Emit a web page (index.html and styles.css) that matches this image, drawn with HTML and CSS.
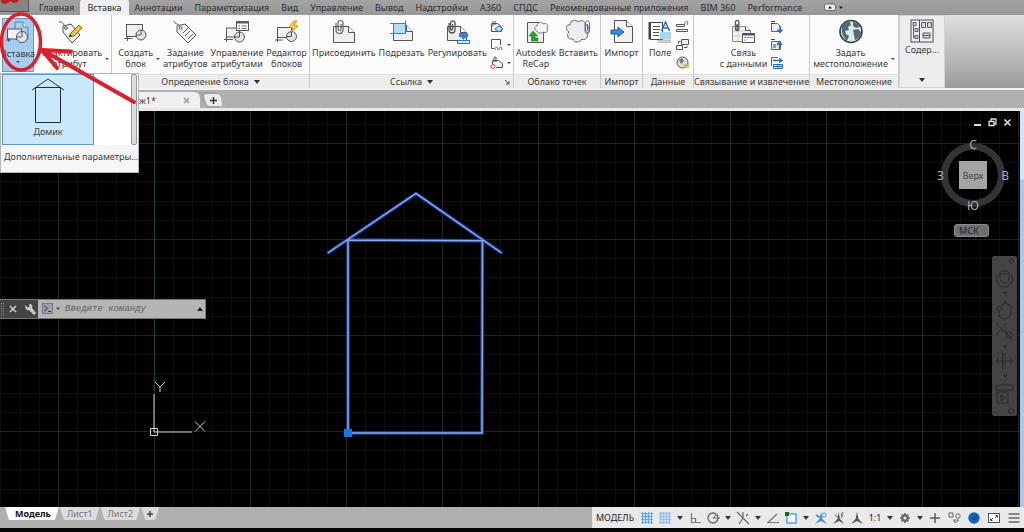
FILE: index.html
```html
<!DOCTYPE html>
<html lang="ru">
<head>
<meta charset="utf-8">
<title>Чертеж</title>
<link rel="stylesheet" href="styles.css">
</head>
<body>
<div class="app">
  <nav class="tabs">
    <button class="app-menu" aria-label="Меню"><svg width="28" height="11" viewBox="0 0 28 11"><path d="M1 0v2l3 2 4-1 2-2 4 2 4-1 1-2z" fill="#c8181e"/></svg></button>
    <button class="tab">Главная</button>
    <button class="tab active">Вставка</button>
    <button class="tab">Аннотации</button>
    <button class="tab">Параметризация</button>
    <button class="tab">Вид</button>
    <button class="tab">Управление</button>
    <button class="tab">Вывод</button>
    <button class="tab">Надстройки</button>
    <button class="tab">A360</button>
    <button class="tab">СПДС</button>
    <button class="tab">Рекомендованные приложения</button>
    <button class="tab">BIM 360</button>
    <button class="tab">Performance</button>
    <button class="collapse" aria-label="Свернуть ленту"><svg width="20" height="9" viewBox="0 0 20 9"><rect x=".5" y="1" width="11" height="6.500" rx="2" fill="#eee" stroke="#666"/><path d="M4 5.500 6 3l2 2.500z" fill="#222"/><path d="M15 3.500h4L17 6z" fill="#222"/></svg></button>
  </nav>

  <div class="ribbon">
    <section class="panel p-block">
      <div class="body">
        <button class="tool selected">
          <svg class="ico" viewBox="0 0 26 26"><path d="M10 2h8l5 5v12H10z" fill="#a9cdec" stroke="#5b86b0"/><path d="M18 2v5h5" fill="#d7eafa" stroke="#5b86b0"/><rect x="2.500" y="9" width="14" height="10" fill="#f2f2f2" stroke="#555"/><circle cx="17" cy="17" r="5.500" fill="#dfe6ec" stroke="#555"/><path d="M17 17v-5M17 17h-5" stroke="#555"/><path d="M1 20h5M3.500 18v4" stroke="#555"/></svg>
          <span>Вставка</span>
          <i class="caret"></i>
        </button>
        <button class="tool edit">
          <svg class="ico" viewBox="0 0 26 26"><path d="M2 3c3-1 4 2 6 4" fill="none" stroke="#555"/><path d="M6 7l8-2 9 11-8 8-9-11z" fill="#f4f4f4" stroke="#555"/><circle cx="9" cy="9" r="1.400" fill="#fff" stroke="#555"/><path d="M12 18l2-4 8-8 3 3-8 8z" fill="#f4c13d" stroke="#8a6914"/><path d="M12 18l1-3 2 2z" fill="#333"/></svg>
          <span>Редактировать<br>атрибут</span>
        </button>
        <i class="caret side"></i>
      </div>
      <h2>Блок</h2>
    </section>

    <section class="panel p-define">
      <div class="body">
        <button class="tool">
          <svg class="ico" viewBox="0 0 26 26"><rect x="3.500" y="5.500" width="16" height="12" fill="#f0f0f0" stroke="#555"/><path d="M1.500 19.500h8M4.500 17v5" stroke="#555" fill="none"/><circle cx="18" cy="16" r="5" fill="#e2e2e2" stroke="#555"/><path d="M18 16v-5M18 16h-5" stroke="#555"/></svg>
          <span>Создать<br>блок</span>
        </button>
        <i class="caret side"></i>
        <button class="tool">
          <svg class="ico" viewBox="0 0 26 26"><path d="M2 2c1 4 4 2 6 5" fill="none" stroke="#555"/><path d="M5 7l8-2 11 11-8 8L5 13z" fill="#f0f0f0" stroke="#555"/><circle cx="8.500" cy="9" r="1.400" fill="#fff" stroke="#555"/><path d="M11 14l5-5M13 17l5-5M16 20l5-5" stroke="#666"/></svg>
          <span>Задание<br>атрибутов</span>
        </button>
        <button class="tool">
          <svg class="ico" viewBox="0 0 26 26"><rect x="2.500" y="9" width="13" height="9" fill="#f0f0f0" stroke="#555"/><path d="M0 20.500h9M2.500 18v5" stroke="#555"/><circle cx="15.500" cy="18" r="5" fill="#e2e2e2" stroke="#555"/><path d="M15.500 18v-5M15.500 18h-5" stroke="#555"/><rect x="12.500" y="2.500" width="12" height="9" fill="#fff" stroke="#555"/><path d="M12.500 3.500h12" stroke="#51637a" stroke-width="2"/><path d="M14 7h2M17.500 7h5M14 9.500h2M17.500 9.500h5" stroke="#58718c"/></svg>
          <span>Управление<br>атрибутами</span>
        </button>
        <button class="tool">
          <svg class="ico" viewBox="0 0 26 26"><rect x="3.500" y="8.500" width="14" height="10" fill="#f0f0f0" stroke="#555"/><path d="M1 21h8M3.500 18v5" stroke="#555"/><circle cx="17.500" cy="17.500" r="5" fill="#e2e2e2" stroke="#555"/><path d="M17.500 17.500v-5M17.500 17.500h-5" stroke="#555"/><path d="M20 2l-5 6 4 1-3 5 8-7-4-1 3-4z" fill="#fbd04a" stroke="#d08b18"/></svg>
          <span>Редактор<br>блоков</span>
        </button>
      </div>
      <h2>Определение блока <i class="caret big"></i></h2>
    </section>

    <section class="panel p-link">
      <div class="body">
        <button class="tool">
          <svg class="ico" viewBox="0 0 26 26"><path d="M2.500 7.500h15l6 6v10h-21z" fill="#eee" stroke="#555"/><path d="M17.500 7.500v6h6" fill="#fff" stroke="#555"/><path d="M5 4v7a3.500 3.500 0 0 0 7 0V4a2.500 2.500 0 0 0-5 0v6a1.500 1.500 0 0 0 3 0V5" fill="none" stroke="#666" stroke-width="1.200"/></svg>
          <span>Присоединить</span>
        </button>
        <button class="tool">
          <svg class="ico" viewBox="0 0 26 26"><path d="M4.500 6.500h13l6 6v9h-19z" fill="#eee" stroke="#555"/><path d="M17.500 6.500v6h6" fill="#fff" stroke="#555"/><rect x="4.500" y="4.500" width="12" height="10" fill="#b5dcf7"/><path d="M1 14.500h15.500V1.500M1 4.500h15.500M4.500 4.500v10" fill="none" stroke="#3681c2"/></svg>
          <span>Подрезать</span>
        </button>
        <button class="tool">
          <svg class="ico" viewBox="0 0 26 26"><path d="M3.500 7.500h13l6 6v8h-19z" fill="#eee" stroke="#555"/><path d="M16.500 7.500v6h6" fill="#fff" stroke="#555"/><path d="M5 4v7a3 3 0 0 0 6 0V4a2.200 2.200 0 0 0-4.400 0v6a1 1 0 0 0 2 0V5" fill="none" stroke="#555" stroke-width="1.300"/><path d="M15 14h9v4h-2l-2.500 3-2.500-3h-2z" fill="#2f86c9"/><path d="M13.500 21.500h12v3h-12z" fill="#cce7fa" stroke="#2f75b5"/></svg>
          <span>Регулировать</span>
        </button>
        <div class="smalls">
          <button class="small" aria-label="Слои подложки"><svg viewBox="0 0 13 13"><path d="M1.500 3.500h6l4 3v5h-10z" fill="#eee" stroke="#555"/><path d="M3 1v5M5 1v4" stroke="#555"/><path d="M5 9l4-3 4 3-4 3z" fill="#b8defb" stroke="#2b78bd"/></svg></button>
          <button class="small" aria-label="Контуры"><svg viewBox="0 0 13 13"><path d="M4 10.500H1.500v-9h9V7" fill="#fff" stroke="#555"/><path d="M5 12c0-4 3-4 3 0m1 0c0-4 3-4 3 0" fill="none" stroke="#2b78bd"/></svg><i class="caret"></i></button>
          <button class="small" aria-label="Привязка"><svg viewBox="0 0 13 13"><path d="M2.500 8V4.500h6l4 3v4H6" fill="#eee" stroke="#555"/><path d="M4 6V2c0-1.500 2-1.500 2 0v4" fill="none" stroke="#555"/><circle cx="3" cy="10.500" r="2" fill="#fff" stroke="#d5422f"/></svg><i class="caret"></i></button>
        </div>
      </div>
      <h2>Ссылка <i class="caret big"></i><svg class="launcher" viewBox="0 0 6 6"><path d="M1 1l3 3M5 2v3H2" fill="none" stroke="#444"/></svg></h2>
    </section>

    <section class="panel p-cloud">
      <div class="body">
        <button class="tool">
          <svg class="ico" viewBox="0 0 26 26"><path d="M4.500 3.500h12v6h4v14h-16z" fill="#eee" stroke="#555"/><path d="M14 12c-3-1-3-4 0-5 0-4 5-5 6-2 4-2 6 2 4 4 2 3-1 6-4 4-2 2-5 1-6-1z" fill="#f5f5f5" stroke="#777"/><path d="M10 12l-4 5h2.500v5H15v-3h-3v-2h2.500z" fill="#29a329" stroke="#168016" stroke-width=".6"/></svg>
          <span>Autodesk<br>ReCap</span>
        </button>
        <button class="tool">
          <svg class="ico" viewBox="0 0 26 26"><path d="M4 13C0 10 1 5 5 6c0-5 6-6 8-3 4-3 8 0 8 3 4 2 4 7 1 8 2 4-2 8-5 6-2 4-8 4-9 0-5 1-7-4-4-7z" fill="#ededed" stroke="#666"/><path d="M20 4v8a2 2 0 0 0 4.500 0V4c0-3-4-3-4 0v7c0 1.500 2 1.500 2 0V5" fill="none" stroke="#3d78ad"/></svg>
          <span>Вставить</span>
        </button>
      </div>
      <h2>Облако точек</h2>
    </section>

    <section class="panel p-import">
      <div class="body">
        <button class="tool">
          <svg class="ico" viewBox="0 0 26 26"><path d="M5.500 1.500h12l6 6v16h-18z" fill="#f2f2f2" stroke="#555"/><path d="M17.500 1.500v6h6" fill="#fff" stroke="#555"/><path d="M2 11h7V8l6 5-6 5v-3H2z" fill="#3b8fe0" stroke="#1c5ca3"/></svg>
          <span>Импорт</span>
        </button>
      </div>
      <h2>Импорт</h2>
    </section>

    <section class="panel p-data">
      <div class="body">
        <button class="tool">
          <svg class="ico" viewBox="0 0 26 26"><path d="M3.500 3.500h12v17h-12z" fill="#fff" stroke="#444"/><path d="M2.500 3v17.500" stroke="#444" stroke-width="2"/><path d="M6 7.500h7M6 10.500h7M6 13.500h6M6 16.500h6" stroke="#555"/><rect x="13" y="13" width="11" height="7" fill="#a8d6f5"/><path d="M14.500 12l4-9 4 9M16 9h5" fill="none" stroke="#2272b8" stroke-width="1.500"/><rect x="11.500" y="21" width="12" height="2.500" fill="#e2d9c5" stroke="#888" stroke-width=".5"/></svg>
          <span>Поле</span>
        </button>
        <div class="smalls">
          <button class="small" aria-label="Обновить поля"><svg viewBox="0 0 13 13"><path d="M.5 4.500h8v2h-8zM.5 9.500h11v2H.5z" fill="#fff" stroke="#555"/><path d="M9 4c-1-3 2-3 3-2M12 2l-1 3" fill="none" stroke="#688a39"/></svg></button>
          <button class="small" aria-label="Связь OLE"><svg viewBox="0 0 13 13"><path d="M5.500 1.500h7v5h-7zM.5 7.500h6v4h-6z" fill="#f5f5f5" stroke="#555"/><path d="M2.500 6V3.500h2M8 9.500h3V8" fill="none" stroke="#555"/></svg></button>
          <button class="small" aria-label="Гиперссылка"><svg viewBox="0 0 13 13"><circle cx="6.500" cy="6.500" r="5.500" fill="#ddd" stroke="#555"/><path d="M3 4l3-2 2 3-3 3zM8 7l3-1" fill="#777"/><path d="M8 9h5M8 11h5" stroke="#ddaf48" stroke-width="1.500"/></svg></button>
        </div>
      </div>
      <h2>Данные</h2>
    </section>

    <section class="panel p-extract">
      <div class="body">
        <button class="tool">
          <svg class="ico" viewBox="0 0 26 26"><path d="M2.500 7.500h13l5 4v11h-18z" fill="#f4f4f4" stroke="#888"/><path d="M3 12h12M3 17h12M8 8v14" stroke="#ccc"/><path d="M15.500 7.500v4h5" fill="#fff" stroke="#555"/><path d="M5.500 3v3a1.700 1.700 0 0 0 3.400 0V3a1.700 1.700 0 0 0-3.400 0M5.500 8v2a1.700 1.700 0 0 0 3.400 0V8M7.200 5v6" fill="none" stroke="#555" stroke-width="1.300"/><rect x="12.500" y="14.500" width="12" height="9" fill="#fff" stroke="#555"/><path d="M12.500 15.500h12" stroke="#445b73" stroke-width="2"/><path d="M14 18.500h2M17 18.500h6M14 21h2" stroke="#888"/></svg>
          <span>Связь<br>с данными</span>
        </button>
        <div class="smalls">
          <button class="small" aria-label="Загрузить"><svg viewBox="0 0 13 13"><path d="M1.500 11.500v-8h6l3 3v5z" fill="#eee" stroke="#666"/><path d="M1 1.500h4M1 3.500h4" stroke="#444"/><path d="M10 6v6M7.500 9.500 10 12.500l2.500-3" fill="none" stroke="#2272b8" stroke-width="1.500"/></svg></button>
          <button class="small" aria-label="Выгрузить"><svg viewBox="0 0 13 13"><path d="M1.500 11.500v-8h9v8z" fill="#eee" stroke="#666"/><path d="M1 1.500h4M3 7h3M3 9h3" stroke="#444"/><path d="M9.500 11V5M7 7l2.500-3L12 7" fill="none" stroke="#2272b8" stroke-width="1.500"/></svg></button>
          <button class="small" aria-label="Извлечь данные"><svg viewBox="0 0 13 13"><path d="M1.500 10V1.500H8" fill="none" stroke="#666"/><path d="M3 4.500h8M9 2.500l3 2-3 2" fill="none" stroke="#2272b8" stroke-width="1.400"/><path d="M3.500 8.500h9v4h-9zM3.500 10.500h9M8 8.500v4" fill="#cce7fa" stroke="#2272b8"/></svg></button>
        </div>
      </div>
      <h2>Связывание и извлечение</h2>
    </section>

    <section class="panel p-place">
      <div class="body">
        <button class="tool">
          <svg class="ico" viewBox="0 0 26 26"><circle cx="13" cy="12.500" r="11" fill="#dcebea" stroke="#333f45" stroke-width="1.600"/><path d="M4 8c2-4 6-6 8-5l1 3-3 2 1 3-4 1 1 3 3 2-2 5c-3-2-6-8-5-14zM15 3c3 0 6 3 7 5l-4 1-3-2zM15 11l5-1 3 3c0 4-4 8-6 8l-1-5z" fill="#526b72"/></svg>
          <span>Задать<br>местоположение</span>
        </button>
        <i class="caret side"></i>
      </div>
      <h2>Местоположение</h2>
    </section>

    <button class="content-panel">
      <svg class="ico" viewBox="0 0 26 26"><rect x="2" y="2" width="22" height="22" fill="#efeff2" stroke="#4c4c55"/><path d="M10.500 2v22" stroke="#4c4c55"/><path d="M4 4.500h3v3H4zM6 10.500h3v3H6zM6 17.500h3v3H6zM4.500 7.500v12H6M12.500 4.500h4v5h-4zM18.500 4.500h4v5h-4zM14 15h7v5h-7zM14 17.500h7" fill="#d5d8e2" stroke="#5a5a66"/></svg>
      <span>Содер...</span>
      <i class="caret big"></i>
    </button>
  </div>

  <div class="files">
    <div class="file"><span>ж1*</span><button class="close" aria-label="Закрыть"><svg width="7" height="7" viewBox="0 0 7 7"><path d="M1 1l5 5M6 1 1 6" stroke="#999" stroke-width="1.500"/></svg></button></div>
    <button class="add-file" aria-label="Новый чертеж"><svg width="28" height="16" viewBox="0 0 28 16"><path d="M0 0h15q4 0 4 4v12H8Q2 10 0 0z" fill="#999" opacity=".55"/><path d="M4 4q0-2 3-2h10q3 0 4 4l1 6q0 2-2 2H10q-3 0-4-3z" fill="#ececec"/><path d="M13.500 5v7M10 8.500h7" stroke="#333" stroke-width="1.500"/></svg></button>
  </div>

  <main class="workspace">
    <svg class="drawing" width="100%" height="100%">
      <defs>
        <pattern id="grid" x="58" y="32" width="96" height="96" patternUnits="userSpaceOnUse">
          <path d="M19.500 0v96M38.500 0v96M58.500 0v96M77.500 0v96M0 19.500h96M0 38.500h96M0 58.500h96M0 77.500h96" stroke="#0f0f0f"/>
          <path d="M.5 0v96M0 .5h96" stroke="#232323"/>
        </pattern>
      </defs>
      <rect width="100%" height="100%" fill="url(#grid)"/>
      <path d="M154.500 0v282" stroke="#12452b"/>
      <path d="M192 320.500H1020" stroke="#471414"/>
      <g fill="none" stroke="#d2d2d2"><path d="M154 283v38h38M150.500 317.500h7v7h-7z"/><path d="M155 271l5 5 5-5M160 276v5M195 310.500l10 10M205 310.500l-10 10"/></g>
      <g fill="none" stroke-linecap="round"><path d="M328.500 141.500 416 82.500 501 141.500M348 322V129l134.500.7L482 322z" stroke="#1b3f99" stroke-width="3.500"/><path d="M328.500 141.500 416 82.500 501 141.500M348 322V129l134.500.7L482 322z" stroke="#86a9ec" stroke-width="1.500"/></g>
      <rect x="344" y="318" width="8" height="8" fill="#1478dc"/>
    </svg>

    <div class="window-buttons">
      <button aria-label="Свернуть"><svg width="9" height="9" viewBox="0 0 9 9"><path d="M1 7h7" stroke="#ddd" stroke-width="2"/></svg></button>
      <button aria-label="Восстановить"><svg width="9" height="9" viewBox="0 0 9 9"><path d="M3 3V1h5v5H6M1 3.500h5v4H1z" fill="none" stroke="#ddd" stroke-width="1.300"/></svg></button>
      <button aria-label="Закрыть"><svg width="9" height="9" viewBox="0 0 9 9"><path d="M1.500 1.500l6 6M7.500 1.500l-6 6" stroke="#ddd" stroke-width="1.700"/></svg></button>
    </div>

    <div class="viewcube">
      <span class="north">С</span><span class="west">З</span><button class="face">Верх</button><span class="east">В</span><span class="south">Ю</span>
    </div>
    <button class="ucs">МСК</button>

    <div class="navbar">
      <svg width="25" height="160" viewBox="0 0 25 160"><g fill="none" stroke="#2b2b2b"><circle cx="19.500" cy="5" r="2"/><circle cx="12.500" cy="23" r="8"/><path d="M8 18h9v6q-4 6-9 0zM11 36.500h4l-2 2zM7 61v-6l-2-4 2-1 3 4v-6h2v-2h2v2h2v1h3v8q-1 6-6 6-5 0-6-4M4 67l12 12M15 67 4 79M13 74l7 10"/><circle cx="17" cy="79" r="3"/><path d="M11 90h4l-2 2zM13 97v16M10.500 97v16M5 105h15M7 102l-3 3 3 3M18 102l3 3-3 3M11 119h4l-2 2zM4 129h17v5H4zM5 136h11v11H5zM9 139l4 3-4 3z"/><circle cx="19.500" cy="155" r="2.500"/></g></svg>
    </div>

    <form class="command">
      <div class="handle">
        <svg width="38" height="18" viewBox="0 1 38 18"><path d="M1.500 4v13M3.500 4v13" stroke="#999" stroke-dasharray="1 1.500"/><path d="M10 7l6 6M16 7l-6 6" stroke="#ccc" stroke-width="1.600"/><path d="M25 6l2.500 2.500 2-1L29 5c3 0 4 2 3 4l4 5-2 2-5-5c-2 1-4-1-4-5z" fill="#ccc"/></svg>
      </div>
      <svg class="prompt" width="20" height="12" viewBox="0 0 20 12"><rect x=".5" y=".5" width="10" height="10" fill="#9c9fa8" stroke="#777b85"/><path d="M2.500 3l3 2.500-3 2.500M6 8.500h3" fill="none" stroke="#333"/><path d="M14 4.500h4l-2 2.500z" fill="#444"/></svg>
      <input type="text" aria-label="Команда" placeholder="Введите команду">
      <button type="button" class="history" aria-label="Журнал команд"><i class="caret up"></i></button>
    </form>

    <div class="edge"></div>
  </main>

  <footer class="bottom">
    <div class="layouts">
      <button class="layout current">Модель</button>
      <button class="layout">Лист1</button>
      <button class="layout">Лист2</button>
      <button class="layout plus" aria-label="Новый лист"><svg width="8" height="8" viewBox="0 0 8 8"><path d="M4 1v6M1 4h6" stroke="#444" stroke-width="1.500"/></svg></button>
    </div>
    <div class="status">
      <button class="model">МОДЕЛЬ</button>
      <button class="st" aria-label="Сетка"><svg viewBox="0 0 14 14"><rect x="2" y="2" width="10" height="10" fill="#c1dcf7"/><path d="M2.500 1v12M5.500 1v12M8.500 1v12M11.500 1v12M1 2.500h12M1 5.500h12M1 8.500h12M1 11.500h12" stroke="#6aa7e6"/></svg></button>
      <button class="st" aria-label="Шаг"><svg viewBox="0 0 14 14"><rect x="1" y="1" width="12" height="12" fill="#c9dcf3"/><path d="M2.500 1v12M5.500 1v12M8.500 1v12M11.500 1v12M1 2.500h12M1 5.500h12M1 8.500h12M1 11.500h12" stroke="#9bbfe8"/></svg></button>
      <button class="st arrow" aria-label="Параметры шага"><i class="caret big"></i></button>
      <button class="st" aria-label="Орто"><svg viewBox="0 0 14 14"><path d="M3.500 2v9.500H13M3.500 7.500h4v4" fill="none" stroke="#777" stroke-width="1.200"/></svg></button>
      <button class="st" aria-label="Полярное отслеживание"><svg viewBox="0 0 14 14"><circle cx="7" cy="7" r="5" fill="none" stroke="#666" stroke-width="1.300"/><path d="M7 7h7M7 7l4-4" stroke="#666"/></svg></button>
      <button class="st arrow" aria-label="Углы"><i class="caret big"></i></button>
      <button class="st" aria-label="Изометрия"><svg viewBox="0 0 14 14"><path d="M1 1l12 12M7 1v6M7 7l-4 6M10 5l2-2" fill="none" stroke="#666" stroke-width="1.200"/></svg></button>
      <button class="st arrow" aria-label="Плоскости"><i class="caret big"></i></button>
      <button class="st" aria-label="Отслеживание"><svg viewBox="0 0 14 14"><path d="M11 3 2 11.500h11" fill="none" stroke="#777" stroke-width="1.200"/></svg></button>
      <button class="st" aria-label="Объектная привязка"><svg viewBox="0 0 14 14"><rect x="3" y="3" width="9" height="9" fill="#fff" stroke="#5b9fe0" stroke-width="1.500"/><rect x="1" y="1" width="4" height="4" fill="#17682c"/></svg></button>
      <button class="st arrow" aria-label="Виды привязки"><i class="caret big"></i></button>
      <button class="st" aria-label="Аннотации"><svg viewBox="0 0 14 14"><path d="M7 1l1.500 7 4.500 5-6-3-6 3 4.500-5z" fill="#3d8fe0"/><path d="M2 4l5 3" stroke="#3d8fe0" stroke-width="1.500"/><circle cx="10" cy="4" r="2" fill="#fff" stroke="#3d8fe0"/></svg></button>
      <button class="st" aria-label="Автомасштаб"><svg viewBox="0 0 14 14"><path d="M6.500 1 8 8l4.500 5-5.500-3-6 3 4.500-5z" fill="#555"/><path d="M3 4l4 3M11 1 9 4h2L9 7" fill="none" stroke="#555"/></svg></button>
      <button class="st" aria-label="Масштаб аннотаций"><svg viewBox="0 0 14 14"><path d="M7 1l1.500 7 4.500 5-6-3-6 3 4.500-5z" fill="#555"/></svg></button>
      <button class="st scale">1:1</button>
      <button class="st arrow" aria-label="Масштаб"><i class="caret big"></i></button>
      <button class="st" aria-label="Рабочее пространство"><svg viewBox="0 0 14 14"><circle cx="7" cy="7" r="2.700" fill="none" stroke="#666" stroke-width="2.200"/><path d="M7 2v2M7 10v2M2 7h2M10 7h2M3.500 3.500l1 1M9.500 9.500l1 1M10.500 3.500l-1 1M4.500 9.500l-1 1" stroke="#666" stroke-width="1.600"/></svg></button>
      <button class="st arrow" aria-label="Пространства"><i class="caret big"></i></button>
      <button class="st" aria-label="Монитор"><svg viewBox="0 0 14 14"><path d="M7 2v10M2 7h10" stroke="#555" stroke-width="1.400"/></svg></button>
      <button class="st wide" aria-label="Изоляция объектов"><svg viewBox="0 0 14 14"><path d="M2 2h4v4H2zM8.500 12l-2-3h5z" fill="none" stroke="#666"/><circle cx="11" cy="5" r="2.200" fill="none" stroke="#666"/></svg></button>
      <button class="st wide" aria-label="Графика"><svg viewBox="0 0 14 14"><circle cx="7" cy="7" r="5.700" fill="#1265b5"/><path d="M6 9l4-4" stroke="#0a3f7d" stroke-width="1.500"/></svg></button>
      <button class="st wide" aria-label="Полный экран"><svg viewBox="0 0 14 14"><rect x="1.500" y="2.500" width="11" height="9" fill="#fff" stroke="#555"/><path d="M3.500 9.500V7.500M3.500 9.500h2M4 9l2-2M10.500 4.500v2M10.500 4.500h-2M10 5 8 7" stroke="#444" fill="none"/></svg></button>
      <button class="st wide" aria-label="Настройка"><svg viewBox="0 0 14 14"><path d="M1.500 3h11M1.500 7h11M1.500 11h11" stroke="#666" stroke-width="1.300"/></svg></button>
    </div>
  </footer>

  <div class="gallery">
    <div class="gallery-list">
      <button class="gallery-item">
        <svg width="34" height="48" viewBox="0 0 34 48"><path d="M1 14 17 3l16 11M4.500 11.500h25v35h-25z" fill="none" stroke="#222e38"/></svg>
        <span>Домик</span>
      </button>
      <div class="scrollbar"></div>
    </div>
    <button class="more">Дополнительные параметры...</button>
  </div>

  <svg class="marks" width="140" height="110" viewBox="0 0 140 110"><g fill="none" stroke="#dc1f2c" stroke-width="3.500" stroke-linecap="round" stroke-linejoin="round"><ellipse cx="21" cy="42" rx="19.500" ry="28"/><path d="M134 102 44 51M71 51.500 42 50 57 68" stroke-width="4"/></g></svg>
</div>
</body>
</html>
```
FILE: styles.css
```css
* { box-sizing: border-box; }
html, body { height: 100%; margin: 0; }
body {
  font-family: "Noto Sans", "Open Sans", sans-serif;
  font-size: 9px;
  line-height: 11px;
  color: #3c3c3c;
  background: #050505;
}
button {
  margin: 0;
  padding: 0;
  border: 0;
  background: none;
  font: inherit;
  color: inherit;
}
svg { display: block; flex: none; }

.app {
  position: relative;
  display: flex;
  flex-direction: column;
  height: 100vh;
  padding-bottom: 4px;
  overflow: hidden;
}

/* carets */
.caret {
  display: inline-block;
  flex: none;
  border: 2px solid transparent;
  border-top-color: #444;
  border-bottom: 0;
}
.caret.big { border-width: 4px 3px 0; border-top-color: #333; }
.caret.up { border: 3px solid transparent; border-bottom: 4px solid #222; border-top: 0; }
.caret.side { align-self: center; margin-top: 28px; }

/* tabs */
.tabs {
  display: flex;
  height: 15px;
  background: linear-gradient(#a3a3a3, #979797);
  color: #2c2c2c;
}
.app-menu {
  display: flex;
  width: 29px;
  height: 12px;
  margin-right: 4px;
  background: #858585;
  border-right: 1px solid #555;
  border-bottom: 1px solid #555;
}
.tab { padding: 0 6px; white-space: nowrap; }
.tab.active { padding: 0 7px; background: #efefef; border-radius: 2px 2px 0 0; }
.collapse { margin-left: 16px; }

/* ribbon */
.ribbon {
  display: flex;
  height: 75px;
  border-bottom: 2px solid #f4f4f4;
  background: linear-gradient(#e0e0e0, #9c9c9c);
}
.panel {
  display: flex;
  flex-direction: column;
  flex: none;
  background: #fbfbfb;
  border-right: 1px solid #c9c9c9;
}
.body { display: flex; flex: 1; justify-content: center; gap: 3px; padding: 0 2px; }
.panel h2 {
  display: flex;
  position: relative;
  align-items: center;
  justify-content: center;
  gap: 5px;
  height: 14px;
  margin: 0;
  font-size: 9px;
  font-weight: 400;
  background: #ededed;
  border-top: 1px solid #dedede;
  white-space: nowrap;
}
.launcher { position: absolute; right: 3px; width: 6px; height: 6px; }
.tool {
  display: flex;
  flex-direction: column;
  align-items: center;
  flex: none;
  gap: 2px;
  padding-top: 4px;
  white-space: nowrap;
}
.ico { width: 26px; height: 26px; }
.tool.selected {
  width: 32px;
  margin: 3px 0 2px;
  padding-top: 1px;
  background: #a4cdf0;
  border: 1px solid #5f9bd0;
}
.p-block { width: 112px; }
.p-block .body { justify-content: flex-start; }
.p-define { width: 198px; }
.p-define .body { padding-left: 6px; }
.p-link { width: 204px; }
.p-cloud { width: 87px; }
.p-import { width: 42px; }
.p-data { width: 51px; }
.p-extract { width: 116px; }
.p-place { width: 89px; }
.smalls { display: flex; flex-direction: column; gap: 5px; padding-top: 5px; }
.small { display: flex; align-items: center; gap: 4px; }
.small svg { width: 13px; height: 13px; }
.content-panel {
  display: flex;
  flex-direction: column;
  align-items: center;
  width: 46px;
  padding: 2px 0 5px;
  background: #ededed;
  border: 1px solid #d2d2d2;
}
.content-panel .caret { margin-top: auto; }

/* file tabs */
.files {
  display: flex;
  align-items: flex-end;
  height: 21px;
  background: #b0b0b0;
  border-bottom: 3px solid #e8e8e8;
}
.file {
  display: flex;
  align-items: center;
  width: 200px;
  height: 16px;
  padding: 0 10px 0 139px;
  background: #f0f0f0;
  border-radius: 0 6px 0 0;
}
.close { margin-left: auto; }

/* workspace */
.workspace { position: relative; flex: 1; min-height: 0; background: #000; }
.drawing { position: absolute; inset: 0; }
.edge {
  position: absolute;
  top: 0;
  right: 0;
  bottom: 0;
  width: 4px;
  background: linear-gradient(#d3e6f8 0 68px, #a9c9e8 69px);
}
.window-buttons { position: absolute; top: 7px; right: 12px; display: flex; gap: 6px; }
.viewcube {
  position: absolute;
  top: 28px;
  right: 15px;
  display: grid;
  grid-template: "n n n" 22px "w c e" 28px "s s s" 22px / 22px 28px 22px;
  place-items: center;
  font-size: 12px;
  color: #aaa;
}
.viewcube::before {
  content: "";
  position: absolute;
  inset: 4px;
  border: 7px solid #343434;
  border-radius: 50%;
}
.viewcube span { position: relative; }
.north { grid-area: n; align-self: start; }
.south { grid-area: s; align-self: end; }
.west { grid-area: w; justify-self: start; }
.east { grid-area: e; justify-self: end; }
.face {
  grid-area: c;
  width: 28px;
  height: 28px;
  font-size: 9px;
  background: #a2a4a6;
  color: #444;
}
.ucs {
  position: absolute;
  top: 113px;
  right: 35px;
  width: 35px;
  height: 13px;
  padding-left: 4px;
  border: 1px solid #8a8a8a;
  border-radius: 3px;
  background: #707070;
  color: #222;
  text-align: left;
}
.navbar {
  position: absolute;
  top: 145px;
  right: 7px;
  border-radius: 2px;
  background: #444;
}
.command {
  position: absolute;
  top: 188px;
  left: 0;
  display: flex;
  align-items: center;
  width: 206px;
  height: 20px;
  border: 1px solid #777;
  border-left: 0;
  background: #b5b5b5;
}
.handle { margin-right: 4px; background: #444; }
.command input {
  flex: 1;
  min-width: 0;
  padding: 0;
  margin-left: 3px;
  border: 0;
  background: none;
  font: italic 9px/12px "Liberation Mono", monospace;
}
.command input::placeholder { color: #606060; opacity: 1; }
.history { display: flex; padding: 4px 2px; }

/* bottom bar */
.bottom {
  display: flex;
  justify-content: space-between;
  align-items: flex-start;
  height: 21px;
  background: #b0b0b0;
}
.layouts { display: flex; gap: 1px; padding-left: 5px; }
.layout {
  height: 13px;
  padding: 0 7px;
  color: #777;
  background: #dcdcdc;
  clip-path: polygon(0 0, 100% 0, calc(100% - 4px) 100%, 4px 100%);
}
.layout.current { padding: 0 8px 0 10px; background: #fff; color: #111; font-weight: 700; }
.layout.plus { padding: 0 5px; }
.status {
  display: flex;
  align-items: center;
  height: 21px;
  background: #e9e9e9;
}
.model { width: 46px; color: #222; }
.st { display: flex; align-items: center; justify-content: center; width: 18px; }
.st svg { width: 14px; height: 14px; }
.st.arrow { width: 12px; height: 14px; }
.st.wide { width: 20px; }
.st.scale { color: #222; }

/* block gallery */
.gallery {
  position: absolute;
  top: 73px;
  left: 0;
  width: 139px;
  border: 1px solid #b5b5b5;
  background: #fff;
}
.gallery-list { display: flex; justify-content: space-between; padding: 0 1px; }
.gallery-item {
  display: flex;
  flex-direction: column;
  align-items: center;
  gap: 2px;
  width: 92px;
  height: 71px;
  padding-top: 1px;
  background: #c9e8fa;
  border: 1px solid #5c9bcc;
}
.scrollbar { width: 6px; border: 1px solid #999; border-radius: 2px; background: #dcdcdc; }
.more {
  display: block;
  width: 100%;
  height: 27px;
  padding: 0 0 4px 3px;
  background: #f6f6f6;
  text-align: left;
  white-space: nowrap;
}
.marks { position: absolute; top: 0; left: 0; pointer-events: none; }
```
